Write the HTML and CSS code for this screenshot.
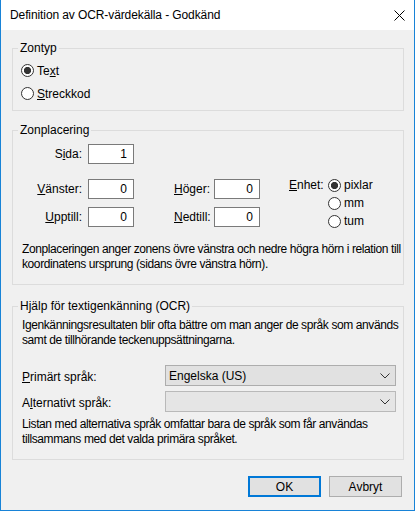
FILE: index.html
```html
<!DOCTYPE html>
<html lang="sv">
<head>
<meta charset="utf-8">
<title>Definition av OCR-värdekälla - Godkänd</title>
<link rel="stylesheet" href="styles.css">
</head>
<body>
<div class="window">
  <div class="titlebar">
    <span class="title">Definition av OCR-värdekälla - Godkänd</span>
    <svg class="close" width="11" height="11" viewBox="0 0 11 11"><path d="M0.5 0.5 L10.5 10.5 M10.5 0.5 L0.5 10.5" stroke="#000" stroke-width="1" fill="none"/></svg>
  </div>
  <div class="content">
    <fieldset class="group g1">
      <legend>Zontyp</legend>
      <div class="inner">
        <div class="radio-row"><span class="radio checked"></span>Te<u>x</u>t</div>
        <div class="radio-row gap"><span class="radio"></span><u>S</u>treckkod</div>
      </div>
    </fieldset>

    <fieldset class="group g2">
      <legend>Zonplacering</legend>
      <div class="inner">
        <div class="fields">
          <span class="lbl-r">S<u>i</u>da:</span><span class="num">1</span>
        </div>
        <div class="coords">
          <div class="fields">
            <span class="lbl-r"><u>V</u>änster:</span><span class="num">0</span>
            <span class="lbl-l"><u>H</u>öger:</span><span class="num">0</span>
            <span class="lbl-r"><u>U</u>pptill:</span><span class="num">0</span>
            <span class="lbl-l"><u>N</u>edtill:</span><span class="num">0</span>
          </div>
          <div class="unit">
            <span class="unit-label"><u>E</u>nhet:</span>
            <div class="unit-list">
              <div class="radio-row u"><span class="radio checked"></span>pixlar</div>
              <div class="radio-row u"><span class="radio"></span>mm</div>
              <div class="radio-row u"><span class="radio"></span>tum</div>
            </div>
          </div>
        </div>
        <p class="note">Zonplaceringen anger zonens övre vänstra och nedre högra hörn i relation till<br>koordinatens ursprung (sidans övre vänstra hörn).</p>
      </div>
    </fieldset>

    <fieldset class="group g3">
      <legend>Hjälp för textigenkänning (OCR)</legend>
      <div class="inner">
        <p class="note first">Igenkänningsresultaten blir ofta bättre om man anger de språk som används<br>samt de tillhörande teckenuppsättningarna.</p>
        <div class="langs">
          <span class="lang-label"><u>P</u>rimärt språk:</span>
          <div class="combo"><span>Engelska (US)</span><svg class="chev" width="10" height="6" viewBox="0 0 10 6"><path d="M0.5 0.5 L5 5 L9.5 0.5" stroke="#333" fill="none"/></svg></div>
          <span class="lang-label">A<u>l</u>ternativt språk:</span>
          <div class="combo disabled"><span></span><svg class="chev" width="10" height="6" viewBox="0 0 10 6"><path d="M0.5 0.5 L5 5 L9.5 0.5" stroke="#333" fill="none"/></svg></div>
        </div>
        <p class="note">Listan med alternativa språk omfattar bara de språk som får användas<br>tillsammans med det valda primära språket.</p>
      </div>
    </fieldset>

    <div class="buttons">
      <button class="btn default">OK</button>
      <button class="btn">Avbryt</button>
    </div>
  </div>
</div>
</body>
</html>
```

FILE: styles.css
```css
* { box-sizing: border-box; }

body {
  margin: 0;
  font-family: "Liberation Sans", Arial, sans-serif;
  font-size: 12px;
  color: #000;
  background: #fff;
}

.window {
  width: 415px;
  height: 511px;
  border: 1px solid #1883d7;
  border-top: 0;
  background: #f0f0f0;
  display: flex;
  flex-direction: column;
}

.titlebar {
  height: 30px;
  flex: none;
  background: #fff;
  display: flex;
  align-items: center;
  padding-left: 9px;
}

.title { font-size: 12px; letter-spacing: -0.1px; }

.close {
  margin-left: auto;
  margin-right: 9px;
}

.content {
  flex: 1;
  padding: 11px 10px 0 11px;
  display: flex;
  flex-direction: column;
}

.group {
  border: 1px solid #dcdcdc;
  margin: 0;
  padding: 0;
  min-width: 0;
}

.group legend {
  margin-left: 5px;
  padding: 0 2px;
  line-height: 15px;
  height: 15px;
}

.g2 { margin-top: 12px; }
.g3 { margin-top: 14px; }

.g1 .inner { padding: 6px 0 8px 8px; }
.g2 .inner { padding: 6px 0 12px 0; }
.g3 .inner { padding: 4px 0 12px 9px; }

.radio-row {
  display: flex;
  align-items: center;
  height: 17px;
}
.radio-row.gap { margin-top: 6px; }
.radio-row.u { height: 18px; }

.radio {
  width: 13px;
  height: 13px;
  border: 1px solid #333;
  border-radius: 50%;
  background: #fff;
  margin-right: 3px;
  flex: none;
}
.radio.checked {
  background: radial-gradient(circle, #333 0, #333 3.3px, #fff 3.9px);
}

.fields {
  display: grid;
  grid-template-columns: 75px 46px 80px 46px;
  row-gap: 2px;
  align-items: center;
}

.lbl-r { text-align: right; padding-right: 6px; }
.lbl-l { padding-left: 40px; }

.num {
  height: 20px;
  line-height: 18px;
  border: 1px solid #7a7a7a;
  background: #fff;
  text-align: right;
  padding-right: 6px;
}

.coords {
  display: flex;
  margin-top: 12px;
}

.unit {
  display: flex;
  margin-left: 29px;
}

.unit-label {
  width: 39px;
  line-height: 18px;
}

.note {
  margin: 12px 0 0 9px;
  line-height: 15px;
  white-space: nowrap;
  letter-spacing: -0.4px;
}
.g3 .note { margin: 5px 0 0 0; }
.g3 .note.first { margin-top: 0; }

.langs {
  display: grid;
  grid-template-columns: 143px 231px;
  row-gap: 5px;
  align-items: center;
  margin-top: 17px;
}

.lang-label { padding-top: 2px; }

.combo {
  height: 21px;
  border: 1px solid #adadad;
  background: #e1e1e1;
  display: flex;
  align-items: center;
  justify-content: space-between;
  padding: 0 5px 0 3px;
}
.combo.disabled {
  background: #e5e5e5;
  border-color: #b9b9b9;
}

.buttons {
  display: flex;
  justify-content: flex-end;
  gap: 8px;
  margin-top: 16px;
  padding-right: 2px;
}

.btn {
  width: 73px;
  height: 21px;
  font: inherit;
  color: #000;
  background: #e1e1e1;
  border: 1px solid #adadad;
  padding: 0;
}
.btn.default { border: 2px solid #0078d7; }
```
